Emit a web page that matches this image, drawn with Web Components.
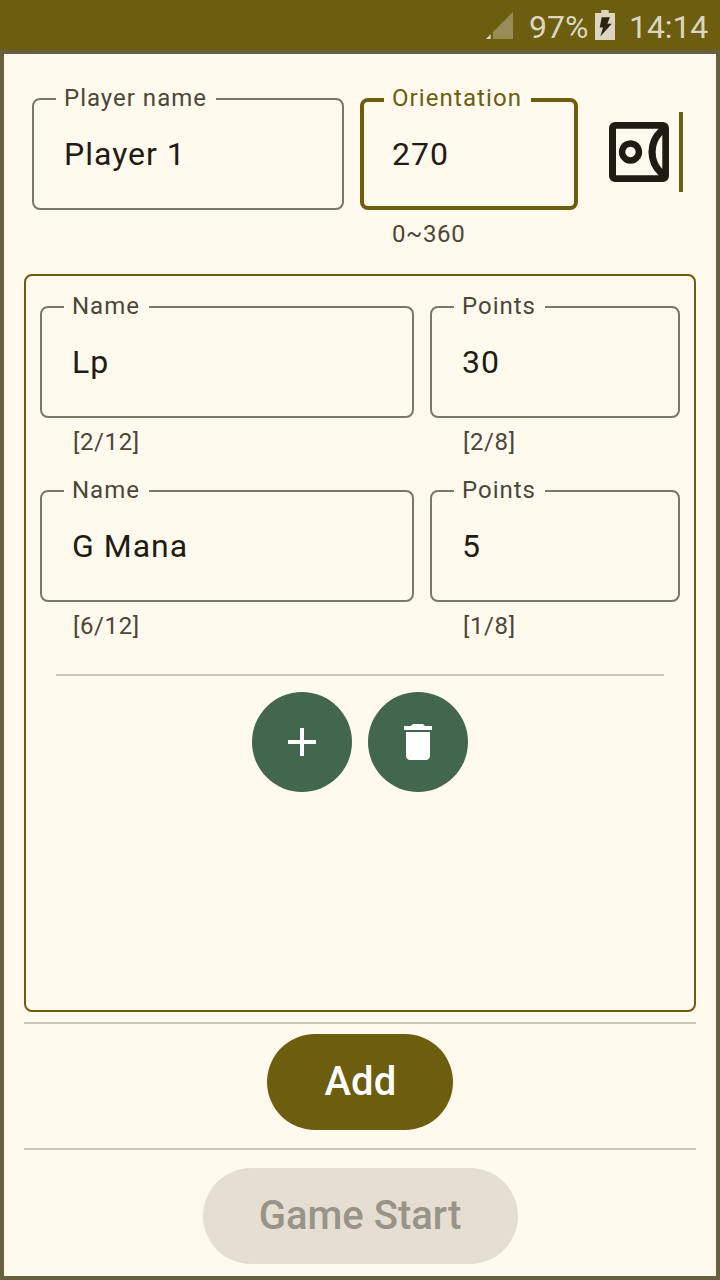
<!DOCTYPE html>
<html lang="en">
<head>
<meta charset="utf-8">
<title>Game setup</title>
<style>
html,body{margin:0;height:100%}
body{font-family:Roboto,"Noto Sans",sans-serif;
--primary:#6c5d0f;--bg:#fff9ee;--ink:#1e1c13;--muted:#4b4739;--outline:#7d7767;--line:#cec6b4;--frame:#665f40;--green:#43664e}
</style>
</head>
<body>
<setup-page></setup-page>
<script>
const define = (name, html, init) => {
  const t = document.createElement('template');
  t.innerHTML = html;
  customElements.define(name, class extends HTMLElement {
    constructor() {
      super();
      this.attachShadow({mode: 'open'}).append(t.content.cloneNode(true));
    }
    connectedCallback() { if (init) init(this, this.shadowRoot); }
  });
};

define('status-bar', `<style>
:host{display:flex;height:50px;background:var(--primary);color:#dcd6c1;font-size:32px;font-weight:400;line-height:54px;box-sizing:border-box;justify-content:flex-end;padding-right:11px}
svg{display:block;flex:none}
.level{width:60px}.clock{width:80px;letter-spacing:-.1px}
.signal{margin-right:15px}.battery{margin:0 13px 0 5px}
</style>
<svg class="signal" width="28" height="50" viewBox="486 0 28 50"><path d="M513 12V39H493V32Z" fill="#998c57"/><path d="M486 39l4.700-5V39Z" fill="#dcd6c1"/></svg>
<span class="level">97%</span>
<svg class="battery" width="22" height="50" viewBox="594 0 22 50"><path d="M601.300 10h7.400v3h6.300v27h-20V13h6.300z" fill="#dcd6c1"/><path d="M601.700 17.300h8.200l-2.500 6.400h4.400l-11.500 12.800 2.700-9h-3.300z" fill="#2b2412"/></svg>
<span class="clock">14:14</span>`);

define('outlined-field', `<style>
:host{display:block;min-width:0}
.box{position:relative;box-sizing:border-box;height:112px;border:2px solid var(--outline);border-radius:8px;display:flex;align-items:center;padding-left:30px;color:var(--ink);font-size:32px;letter-spacing:1px}
.label{position:absolute;left:22px;top:-18px;padding:0 9px 0 8px;background:var(--bg);color:var(--muted);font-size:24px;line-height:32px;letter-spacing:1px;white-space:nowrap}
.help{padding:8px 0 0 33px;height:32px;line-height:32px;font-size:24px;letter-spacing:.6px;color:var(--muted)}
:host([active]) .box{border:4px solid var(--primary);padding-left:28px}
:host([active]) .label{left:20px;top:-20px;color:var(--primary);letter-spacing:1.1px}
:host([active]) .help{padding-left:32px}
</style>
<div class="box"><span class="label"></span><slot></slot></div><div class="help"></div>`,
(el, r) => {
  r.querySelector('.label').textContent = el.getAttribute('label');
  r.querySelector('.help').textContent = el.getAttribute('help') || '';
});

define('seat-preview', `<style>
:host{display:flex;align-items:center;height:80px;gap:10px}
i{width:4px;height:80px;background:var(--primary)}
svg{display:block}
</style>
<svg width="60" height="60" viewBox="609 122 60 60" fill="#1e1c13" fill-rule="evenodd">
<path d="M615 122H663a6 6 0 0 1 6 6V176a6 6 0 0 1-6 6H615a6 6 0 0 1-6-6V128a6 6 0 0 1 6-6ZM616 128.700V175.300H658.500A32 32 0 0 1 658.500 128.700ZM662.300 135A25 25 0 0 0 662.300 169Z"/>
<path d="M630.500 140.300a11.700 11.700 0 1 0 .01 0ZM630.500 146.800a5.200 5.200 0 1 1-.01 0Z"/></svg><i></i>`);

define('divider-line', `<style>:host{display:block;height:2px;background:var(--line)}</style>`);

define('round-button', `<style>
:host{display:grid;place-items:center;width:100px;height:100px;border-radius:50%;background:var(--green);color:#fff}
</style><slot></slot>`);

define('pill-button', `<style>
:host{display:flex;align-items:center;justify-content:center;width:186px;height:96px;border-radius:48px;background:var(--primary);color:#fff;font-size:40px;font-weight:500;letter-spacing:.2px;box-sizing:border-box;padding:0 0 2px 1px}
:host([disabled]){width:315px;letter-spacing:0;padding-left:0;background:#e5ded3;color:#989488}
</style><slot></slot>`);

define('points-panel', `<style>
:host{display:block;box-sizing:border-box;height:738px;border:2px solid var(--primary);border-radius:8px;padding:30px 14px}
.rows{display:grid;grid-template-columns:374px 250px;column-gap:16px;row-gap:32px}
divider-line{margin:32px 16px 16px}
.actions{display:flex;justify-content:center;gap:16px}
svg{display:block}
</style>
<div class="rows">
<outlined-field label="Name" help="[2/12]">Lp</outlined-field>
<outlined-field label="Points" help="[2/8]">30</outlined-field>
<outlined-field label="Name" help="[6/12]">G Mana</outlined-field>
<outlined-field label="Points" help="[1/8]">5</outlined-field>
</div>
<divider-line></divider-line>
<div class="actions">
<round-button><svg width="48" height="48" viewBox="0 0 24 24" fill="currentColor"><path d="M19 13h-6v6h-2v-6H5v-2h6V5h2v6h6z"/></svg></round-button>
<round-button><svg width="48" height="48" viewBox="0 0 24 24" fill="currentColor"><path d="M6 19c0 1.100.9 2 2 2h8c1.100 0 2-.9 2-2V7H6zM19 4h-3.500l-.7-.7a1 1 0 0 0-.7-.3H9.900a1 1 0 0 0-.7.3L8.500 4H5v2h14z"/></svg></round-button>
</div>`);

define('setup-page', `<style>
:host{display:flex;flex-direction:column;width:720px;height:1280px;overflow:hidden}
main{flex:1;box-sizing:border-box;border:4px solid var(--frame);background:var(--bg);padding:44px 20px 0;display:flex;flex-direction:column}
.player{display:grid;grid-template-columns:312px 218px auto;column-gap:16px;padding-left:8px;height:176px;box-sizing:border-box}
seat-preview{margin:14px 0 0 15px}
pill-button{align-self:center}
</style>
<status-bar></status-bar>
<main>
<div class="player">
<outlined-field label="Player name">Player 1</outlined-field>
<outlined-field label="Orientation" help="0~360" active>270</outlined-field>
<seat-preview></seat-preview>
</div>
<points-panel></points-panel>
<divider-line style="margin:10px 0"></divider-line>
<pill-button>Add</pill-button>
<divider-line style="margin:18px 0"></divider-line>
<pill-button disabled>Game Start</pill-button>
</main>`);
</script>
</body>
</html>
